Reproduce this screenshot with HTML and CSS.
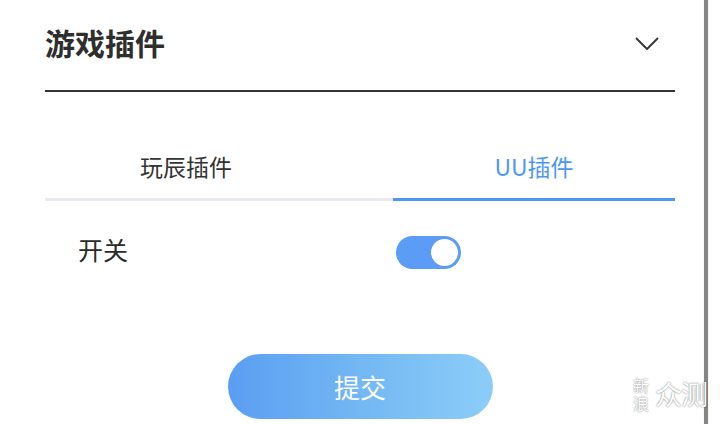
FILE: index.html
```html
<!DOCTYPE html>
<html lang="zh">
<head>
<meta charset="utf-8">
<link rel="stylesheet" href="styles.css">
</head>
<body>
<div class="page">
  <main class="panel">
    <header class="head">
      <h1 class="title">游戏插件</h1>
      <svg class="chev" width="24" height="14" viewBox="0 0 24 14"><path d="M1.5 1.5 L12 12 L22.5 1.5" fill="none" stroke="#333" stroke-width="1.8" stroke-linecap="round" stroke-linejoin="round"/></svg>
    </header>
    <nav class="tabs">
      <div class="tab tab-left">玩辰插件</div>
      <div class="tab tab-right active">UU插件</div>
    </nav>
    <div class="row">
      <div class="label">开关</div>
      <div class="toggle-cell"><span class="toggle"><span class="knob"></span></span></div>
    </div>
    <div class="actions">
      <button class="submit">提交</button>
    </div>
  </main>
  <div class="edge"></div>
  <div class="margin"></div>
  <div class="watermark"><span class="wm-small">新浪</span><span class="wm-big">众测</span></div>
</div>
</body>
</html>
```
FILE: styles.css
```css
* { box-sizing: border-box; }
html, body { margin: 0; padding: 0; background: #fff; }
body { font-family: "Noto Sans CJK SC", "Noto Sans", sans-serif; color: #333; }
.page { position: relative; display: flex; width: 720px; height: 424px; overflow: hidden; }
.panel { width: 704px; padding-left: 45px; padding-right: 29px; }
.edge { width: 4px; background: #858585; box-shadow: 0 0 1px #bbb; }
.margin { flex: 1; }
.head { height: 92px; display: flex; align-items: center; justify-content: space-between; border-bottom: 2px solid #333; padding-bottom: 7px; }
.title { margin: 0; font-size: 30px; font-weight: 700; line-height: 40px; letter-spacing: 0; color: #2e2e2e; }
.chev { margin-right: 16px; margin-top: 4px; }
.tabs { display: grid; grid-template-columns: 348px 282px; }
.tab { height: 109px; display: flex; align-items: flex-end; justify-content: center; padding-bottom: 15px; font-size: 23px; line-height: 34px; border-bottom: 3px solid #e9e9f0; color: #333; }
.tab-left { padding-right: 66px; }
.tab.active { color: #4d96f6; border-bottom-color: #4d96f6; }
.row { display: grid; grid-template-columns: 348px 282px; height: 102px; align-items: center; }
.label { padding-left: 33px; padding-bottom: 6px; font-size: 25px; line-height: 34px; color: #2a2a2a; }
.toggle-cell { padding-left: 3px; display: flex; }
.toggle { width: 65px; height: 33px; border-radius: 17px; background: #5a9cf6; display: flex; align-items: center; justify-content: flex-end; padding-right: 3px; }
.knob { width: 27px; height: 27px; border-radius: 50%; background: #fff; }
.actions { display: flex; justify-content: center; margin-top: 51px; }
.submit { width: 265px; height: 65px; border: none; border-radius: 33px; background: linear-gradient(90deg, #5b9ef2 0%, #78bcf4 60%, #8ccdf7 100%); color: #fff; font-family: inherit; font-size: 26px; line-height: 34px; padding: 0; }
.watermark { position: absolute; left: 631px; top: 378px; display: flex; align-items: flex-start; gap: 5px; color: #fff; text-shadow: 0 0 2px rgba(0,0,0,0.4), 0 0 1px rgba(0,0,0,0.3); }
.wm-small { writing-mode: vertical-rl; font-size: 16px; line-height: 19px; letter-spacing: 2px; }
.wm-big { font-size: 27px; line-height: 32px; letter-spacing: -1px; }
```
